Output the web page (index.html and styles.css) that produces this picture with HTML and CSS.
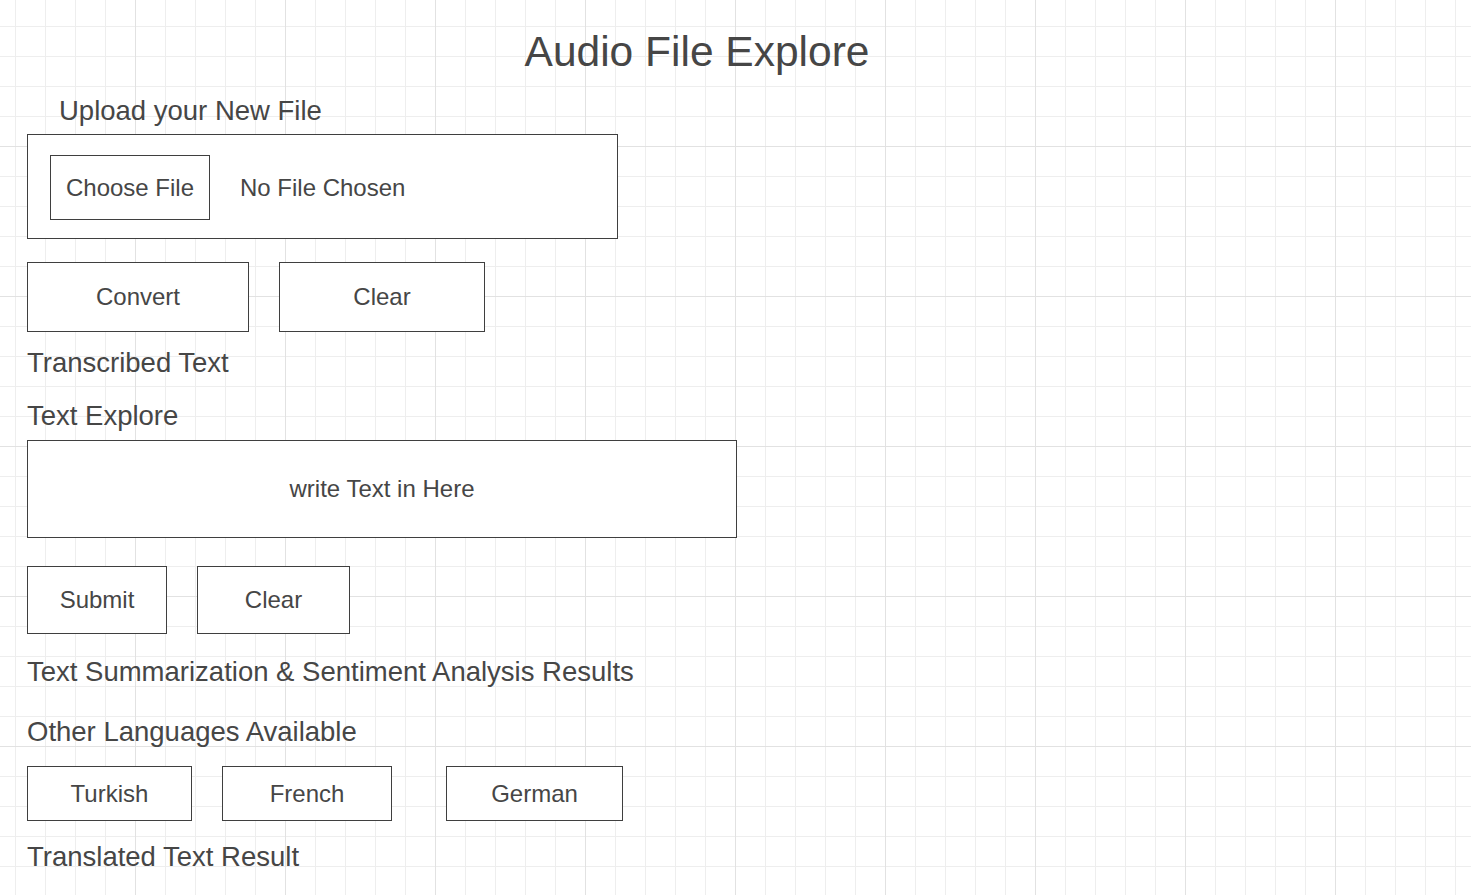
FILE: index.html
```html
<!DOCTYPE html>
<html lang="en">
<head>
<meta charset="utf-8">
<title>Audio File Explore</title>
<link rel="stylesheet" href="styles.css">
</head>
<body>
<main class="page">
  <h1 class="title">Audio File Explore</h1>

  <h2 class="heading heading-upload">Upload your New File</h2>
  <div class="upload-box">
    <div class="btn btn-choose">Choose File</div>
    <span class="file-status">No File Chosen</span>
  </div>

  <div class="row row-convert">
    <div class="btn btn-convert">Convert</div>
    <div class="btn btn-clear1">Clear</div>
  </div>

  <h2 class="heading heading-transcribed">Transcribed Text</h2>
  <h2 class="heading heading-explore">Text Explore</h2>
  <div class="text-input">write Text in Here</div>

  <div class="row row-submit">
    <div class="btn btn-submit">Submit</div>
    <div class="btn btn-clear2">Clear</div>
  </div>

  <h2 class="heading heading-summary">Text Summarization &amp; Sentiment Analysis Results</h2>
  <h2 class="heading heading-languages">Other Languages Available</h2>

  <div class="row row-langs">
    <div class="btn btn-turkish">Turkish</div>
    <div class="btn btn-french">French</div>
    <div class="btn btn-german">German</div>
  </div>

  <h2 class="heading heading-translated">Translated Text Result</h2>
</main>
</body>
</html>
```

FILE: styles.css
```css
html, body {
  margin: 0;
  padding: 0;
}

body {
  min-height: 895px;
  background-color: #ffffff;
  background-image:
    linear-gradient(to right, #e2e2e2 1px, transparent 1px),
    linear-gradient(to bottom, #e2e2e2 1px, transparent 1px),
    linear-gradient(to right, #eeeeee 1px, transparent 1px),
    linear-gradient(to bottom, #eeeeee 1px, transparent 1px);
  background-size: 150px 150px, 150px 150px, 30px 30px, 30px 30px;
  background-position: 135px 146px, 135px 146px, 15px 26px, 15px 26px;
  font-family: "Liberation Sans", Arial, sans-serif;
  color: #464646;
  overflow: hidden;
}

.page {
  display: flex;
  flex-direction: column;
  align-items: flex-start;
  padding: 27px 0 0 27px;
}

.title {
  margin: 0;
  width: 1394px;
  margin-left: -27px;
  height: 50px;
  line-height: 50px;
  font-size: 42.5px;
  font-weight: normal;
  text-align: center;
}

.heading {
  margin: 0;
  height: 30px;
  line-height: 32px;
  font-size: 27.5px;
  font-weight: normal;
  white-space: nowrap;
}

.heading-upload { margin-top: 18px; margin-left: 32px; }
.heading-transcribed { margin-top: 15px; }
.heading-explore { margin-top: 23px; }
.heading-summary { margin-top: 22px; }
.heading-languages { margin-top: 30px; }
.heading-translated { margin-top: 20px; }

.btn {
  box-sizing: border-box;
  display: flex;
  align-items: center;
  justify-content: center;
  border: 1px solid #3f3f3f;
  background: #ffffff;
  font-size: 24px;
  white-space: nowrap;
}

.upload-box {
  box-sizing: border-box;
  margin-top: 9px;
  width: 591px;
  height: 105px;
  border: 1px solid #3f3f3f;
  background: #ffffff;
  padding: 20px 0 0 22px;
  display: flex;
  align-items: flex-start;
}

.btn-choose {
  width: 160px;
  height: 65px;
}

.file-status {
  margin-left: 30px;
  height: 65px;
  line-height: 65px;
  font-size: 24px;
  white-space: nowrap;
}

.row {
  display: flex;
  gap: 30px;
}

.row-convert { margin-top: 23px; }
.btn-convert { width: 222px; height: 70px; }
.btn-clear1 { width: 206px; height: 70px; }

.text-input {
  box-sizing: border-box;
  margin-top: 10px;
  width: 710px;
  height: 98px;
  border: 1px solid #3f3f3f;
  background: #ffffff;
  display: flex;
  align-items: center;
  justify-content: center;
  font-size: 24px;
}

.row-submit { margin-top: 28px; }
.btn-submit { width: 140px; height: 68px; }
.btn-clear2 { width: 153px; height: 68px; }

.row-langs { margin-top: 20px; }
.btn-turkish { width: 165px; height: 55px; }
.btn-french { width: 170px; height: 55px; }
.btn-german { width: 177px; height: 55px; margin-left: 24px; }
```
